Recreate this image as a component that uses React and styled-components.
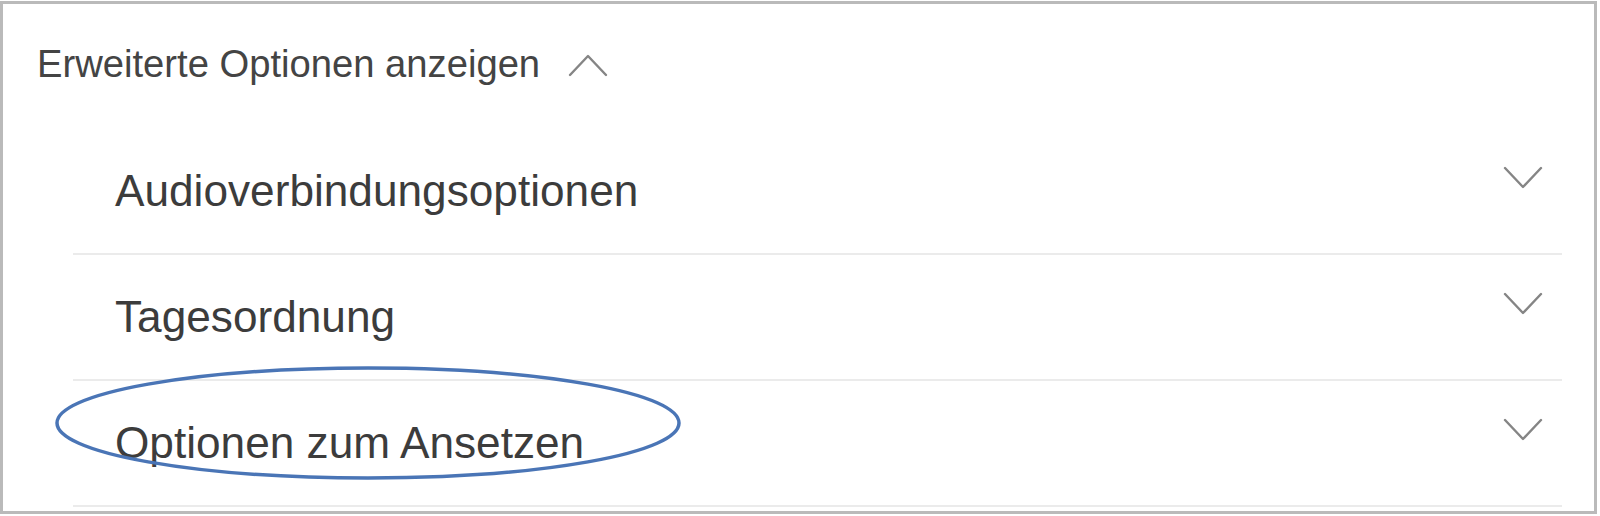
import React from "react";
import styled, { createGlobalStyle } from "styled-components";

const GlobalStyle = createGlobalStyle`
  html, body { margin: 0; padding: 0; background: #ffffff; }
  body { font-family: "Liberation Sans", Arial, sans-serif; }
`;

const Frame = styled.div`
  position: relative;
  box-sizing: border-box;
  width: 1597px;
  height: 513px;
  margin-top: 1px;
  border: 3px solid #bababa;
  background: #ffffff;
  overflow: hidden;
`;

const Header = styled.div`
  display: flex;
  align-items: flex-start;
  gap: 28px;
  height: 125px;
  padding: 38px 0 0 34px;
  box-sizing: border-box;
`;

const HeaderText = styled.span`
  font-size: 38.2px;
  line-height: 1.15;
  color: #444444;
`;

const Chevron = styled.svg`
  flex: none;
  width: 40px;
  height: 24px;
  margin-top: ${(p) => p.$top || 0}px;
`;

const List = styled.div`
  margin: 0 32px 0 70px;
`;

const Row = styled.div`
  display: flex;
  align-items: flex-start;
  justify-content: space-between;
  height: 126px;
  box-sizing: border-box;
  padding: 37px 19px 0 42px;
  border-bottom: 2px solid #ebebeb;
`;

const Label = styled.span`
  font-size: 44.2px;
  line-height: 1.15;
  color: #3c3c3c;
`;

const Annotation = styled.svg`
  position: absolute;
  left: 50px;
  top: 360px;
  width: 640px;
  height: 124px;
  pointer-events: none;
`;

const ChevronDown = () => (
  <Chevron viewBox="0 0 40 24">
    <polyline points="2,2 20,21 38,2" fill="none" stroke="#858585" strokeWidth="2.4" strokeLinecap="round" strokeLinejoin="round" />
  </Chevron>
);

const ChevronUp = () => (
  <Chevron $top={11} viewBox="0 0 40 24">
    <polyline points="2,22 20,3 38,22" fill="none" stroke="#858585" strokeWidth="2.4" strokeLinecap="round" strokeLinejoin="round" />
  </Chevron>
);

const items = ["Audioverbindungsoptionen", "Tagesordnung", "Optionen zum Ansetzen"];

export default function App() {
  return (
    <>
      <GlobalStyle />
      <Frame>
        <Header>
          <HeaderText>Erweiterte Optionen anzeigen</HeaderText>
          <ChevronUp />
        </Header>
        <List>
          {items.map((t) => (
            <Row key={t}>
              <Label>{t}</Label>
              <ChevronDown />
            </Row>
          ))}
        </List>
        <Annotation viewBox="0 0 640 124">
          <ellipse cx="315" cy="59" rx="311" ry="55" fill="none" stroke="#4a75b6" strokeWidth="3.5" />
        </Annotation>
      </Frame>
    </>
  );
}
